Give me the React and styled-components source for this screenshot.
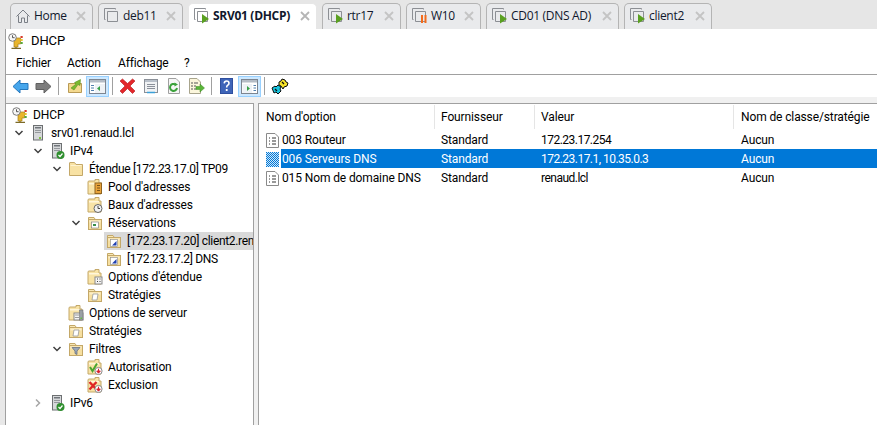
import React from "react";
import styled, { createGlobalStyle } from "styled-components";

const Global = createGlobalStyle`
  html, body { margin: 0; padding: 0; height: 100%; overflow: hidden; }
  body { background: #e8e8e8; font-family: "Roboto", "Noto Sans", sans-serif; font-size: 12px; letter-spacing: -0.12px; color: #000; }
  #root { height: 100%; }
`;

const Page = styled.div`
  width: 877px;
  height: 425px;
  display: flex;
  flex-direction: column;
  overflow: hidden;
`;

/* tabs */
const TabBar = styled.div`
  height: 29px;
  flex: none;
  display: flex;
  align-items: flex-end;
  gap: 5px;
  padding-left: 10px;
  background: #e6e6e6;
`;

const Tab = styled.div`
  width: ${(p) => p.$w}px;
  height: 26px;
  box-sizing: border-box;
  display: flex;
  align-items: center;
  padding: 0 6px 2px 4px;
  gap: 3px;
  background: ${(p) => (p.$active ? "#fff" : "#e9eaec")};
  border: 1px solid ${(p) => (p.$active ? "#e6e6e6" : "#b4b4b4")};
  border-bottom: none;
  border-radius: 5px 5px 0 0;
  font-family: "Open Sans", sans-serif;
  font-size: 12px;
  letter-spacing: -0.3px;
  font-weight: ${(p) => (p.$active ? 700 : 400)};
  color: #10182c;
  white-space: nowrap;
`;

const TabLabel = styled.span`
  flex: 1;
`;

const CloseX = styled.svg`
  width: 10px;
  height: 10px;
  flex: none;
`;

/* window */
const Window = styled.div`
  flex: 1;
  margin-left: 5px;
  border-left: 1px solid #a0a0a0;
  background: #fff;
  display: flex;
  flex-direction: column;
  min-height: 0;
`;

const TitleRow = styled.div`
  height: 23px;
  display: flex;
  align-items: center;
  padding-left: 2px;
  gap: 7px;
  font-size: 13px;
`;

const MenuBar = styled.div`
  height: 22px;
  display: flex;
  align-items: center;
  padding-left: 10px;
  border-bottom: 1px solid #a0a0a0;
`;

const MenuItem = styled.span`
  width: ${(p) => p.$w}px;
`;

const Toolbar = styled.div`
  height: 22px;
  display: flex;
  align-items: center;
  padding-left: 2px;
`;

const ToolButton = styled.div`
  width: ${(p) => p.$w || 23}px;
  height: 21px;
  display: flex;
  align-items: center;
  justify-content: center;
  flex: none;
  box-sizing: border-box;
  ${(p) => p.$on && "background: #cce8ff; border: 1px solid #99d1ff;"}
`;

const ToolSep = styled.div`
  width: 1px;
  height: 18px;
  background: #a0a0a0;
  margin: 0 ${(p) => p.$m || 3}px;
  flex: none;
`;

const Strip = styled.div`
  height: 6px;
  background: #f0f0f0;
  flex: none;
`;

const Panels = styled.div`
  flex: 1;
  min-height: 0;
  display: flex;
  gap: 4px;
  background: #f0f0f0;
`;

const TreePane = styled.div`
  width: 248px;
  box-sizing: border-box;
  background: #fff;
  border-top: 1px solid #a0a0a0;
  border-right: 1px solid #a0a0a0;
  padding-top: 2px;
  overflow: hidden;
  flex: none;
`;

const TreeRow = styled.div`
  height: 18px;
  display: flex;
  align-items: center;
  white-space: nowrap;
  overflow: hidden;
  background: ${(p) => (p.$selected ? "#d9d9d9" : "transparent")};
  margin-left: ${(p) => (p.$selected ? 98 : 0)}px;
  padding-left: ${(p) => (p.$selected ? 2 : 0)}px;
`;

const Indent = styled.div`
  width: ${(p) => p.$level * 19 + 5}px;
  flex: none;
  display: flex;
  justify-content: flex-end;
  align-items: center;
  padding-right: 6px;
  box-sizing: border-box;
`;

const IconSlot = styled.div`
  width: 16px;
  height: 16px;
  flex: none;
  display: flex;
  align-items: center;
  justify-content: center;
`;

const TreeLabel = styled.span`
  margin-left: 5px;
  letter-spacing: ${(p) => (p.$tight ? "-0.32px" : "inherit")};
`;

const ListPane = styled.div`
  flex: 1;
  background: #fff;
  border-top: 1px solid #a0a0a0;
  border-left: 1px solid #a0a0a0;
  min-width: 0;
  overflow: hidden;
`;

const columns = "176px 100px 199px 1fr";

const HeaderRow = styled.div`
  display: grid;
  grid-template-columns: ${columns};
  height: 25px;
  margin-bottom: 1px;
  white-space: nowrap;
`;

const HeaderCell = styled.div`
  display: flex;
  align-items: center;
  padding-left: ${(p) => p.$pad || 6}px;
  border-right: ${(p) => (p.$last ? "none" : "1px solid #e5e5e5")};
  margin-top: 1px;
`;

const ListRow = styled.div`
  height: 19px;
  display: grid;
  grid-template-columns: ${columns};
  align-items: center;
  position: relative;
`;

const NameCell = styled.div`
  display: flex;
  align-items: center;
  height: 100%;
  padding-left: 7px;
  gap: 2px;
`;

const NameText = styled.span`
  height: 100%;
  display: flex;
  align-items: center;
  flex: 1;
  padding-left: 1px;
  ${(p) => p.$selected && "background: #0078d7; color: #fff;"}
`;

const Cell = styled.div`
  height: 100%;
  display: flex;
  align-items: center;
  padding-left: ${(p) => p.$pad || 6}px;
  letter-spacing: ${(p) => (p.$tight ? "-0.52px" : "inherit")};
  ${(p) => p.$selected && "background: #0078d7; color: #fff;"}
`;

/* drawings */
const Svg = ({ w = 16, h = 16, children }) => (
  <svg width={w} height={h} viewBox={`0 0 ${w} ${h}`} style={{ display: "block", flex: "none" }}>
    {children}
  </svg>
);

const X = ({ active }) => (
  <CloseX viewBox="0 0 10 10">
    <path d="M1 1 L9 9 M9 1 L1 9" stroke={active ? "#b5b5b5" : "#c4c4c4"} strokeWidth="1.8" />
  </CloseX>
);

const HomeIcon = () => (
  <Svg>
    <path d="M1.5 8.5 L8 2 L14.5 8.5 M3.5 7.5 V14.5 H6.5 V10 H9.5 V14.5 H12.5 V7.5" fill="none" stroke="#7a7f86" strokeWidth="1" />
  </Svg>
);

const VmIcon = ({ state }) => (
  <Svg w={17} h={17}>
    <path d="M12.5 2.5 V1.5 H1.5 V12.5 H2.5" fill="none" stroke="#8c8f94" />
    <path d="M4.5 4.5 H14.5 V14.5 H4.5 Z" fill="none" stroke="#8c8f94" />
    {state === "run" && <path d="M9 7 L16 12 L9 16.5 Z" fill="#5aa021" />}
    {state === "pause" && (
      <g fill="#f26b1d">
        <rect x="10" y="8" width="2" height="8" />
        <rect x="13.5" y="8" width="2" height="8" />
      </g>
    )}
  </Svg>
);

const DhcpIcon = () => (
  <Svg>
    <path d="M6 5 H12.5 V11 H10 V14 H6 Z" fill="#e8b52c" stroke="#a8801a" strokeWidth="0.7" />
    <circle cx="4.5" cy="4.5" r="3.8" fill="#f6f6f6" stroke="#7c7c7c" />
    <path d="M4.5 2.3 V4.7 H6.6" fill="none" stroke="#555" />
    <rect x="12.5" y="3" width="2.2" height="2" fill="#d9392a" />
    <rect x="12.5" y="6" width="2.2" height="2" fill="#e8c52c" />
    <rect x="12.5" y="9" width="2.2" height="2" fill="#58a83a" />
    <path d="M8 14 V15 M3.5 15.4 H13" stroke="#7c6a28" strokeWidth="1.2" />
  </Svg>
);

const ServerIcon = ({ ok }) => (
  <Svg>
    <rect x="3.5" y="0.5" width="9" height="14.5" fill="#d6d8da" stroke="#6d7072" />
    <rect x="5" y="2" width="6" height="1.5" fill="#70757a" />
    <rect x="5" y="5" width="6" height="1" fill="#94989c" />
    <rect x="5" y="7" width="6" height="1" fill="#94989c" />
    {ok ? (
      <>
        <circle cx="11.5" cy="12" r="4" fill="#2f8f2f" />
        <path d="M9.5 12 L11 13.5 L13.5 10.5" fill="none" stroke="#fff" strokeWidth="1.2" />
      </>
    ) : (
      <rect x="9" y="12" width="2" height="2" fill="#7fc241" />
    )}
  </Svg>
);

const FolderBase = () => (
  <>
    <path d="M1.5 4 V2.5 H7 L8 4" fill="#f7e7b5" stroke="#c4a868" />
    <rect x="1.5" y="4.5" width="13" height="10" fill="#f6dfa0" stroke="#c4a868" />
    <rect x="2.5" y="5.5" width="11" height="2" fill="#fbeec8" />
  </>
);

const TallFolder = ({ children }) => (
  <Svg>
    <path d="M1 15 V3 Q1 2 2 2 H8 V0.5 H12 V4 H14 V15 Z" fill="#f8e3a6" stroke="#c4a868" />
    <rect x="2" y="4" width="10" height="1.5" fill="#fff6da" />
    {children}
  </Svg>
);

const PlainFolder = () => (
  <Svg>
    <path d="M1.5 14.5 V2 Q1.5 1.5 2 1.5 H6.5 L8 3.5 H14.5 V14.5 Z" fill="#f8e2a4" stroke="#c4a868" />
    <path d="M2.5 4.5 H13.5" stroke="#fff3cf" />
  </Svg>
);

const BoxFolder = ({ children }) => (
  <Svg>
    <FolderBase />
    {children}
  </Svg>
);

const Chevron = ({ open, dim }) => (
  <Svg w={10} h={10}>
    {open ? (
      <path d="M1.5 3 L5 6.5 L8.5 3" fill="none" stroke="#404040" strokeWidth="1.5" />
    ) : (
      <path d="M3 1.5 L6.5 5 L3 8.5" fill="none" stroke={dim ? "#a6a6a6" : "#404040"} strokeWidth="1.5" />
    )}
  </Svg>
);

const ResvMark = () => (
  <>
    <rect x="4.5" y="7" width="7" height="6" fill="#fff" stroke="#777" strokeWidth="0.6" />
    <rect x="6" y="9" width="3" height="2" fill="#3a8f4a" />
  </>
);

const ResvItemMark = () => (
  <>
    <rect x="4.5" y="6.5" width="7" height="7" fill="#fff" stroke="#888" strokeWidth="0.6" />
    <path d="M6 12.5 H10.5 V8 Z" fill="#1f3fb0" />
  </>
);

const ScriptMark = () => (
  <path d="M6 7 H11 L10 13 H5 Z" fill="#fff" stroke="#999" strokeWidth="0.8" />
);

const DownBadge = () => (
  <>
    <circle cx="11.5" cy="12" r="3.6" fill="#fff" stroke="#8a8a8a" />
    <path d="M11.5 9.7 V12 M9.7 12 H13.3 L11.5 14.2 Z" fill="#d8202a" stroke="#d8202a" />
  </>
);

const OptionDoc = ({ selected }) => (
  <Svg w={13} h={16}>
    <defs>
      <pattern id="dither" width="2" height="2" patternUnits="userSpaceOnUse">
        <rect width="2" height="2" fill="#0078d7" />
        <rect width="1" height="1" fill="#cfe6f8" />
        <rect x="1" y="1" width="1" height="1" fill="#cfe6f8" />
      </pattern>
    </defs>
    <path d="M0.5 1.5 H9 L12.5 5 V15.5 H0.5 Z" fill="#fff" stroke="#8a8a8a" />
    <path d="M3 6 H4 M6 6 H10 M3 9 H4 M6 9 H10 M3 12 H4 M6 12 H10" stroke="#333" />
    {selected && <rect x="0" y="1" width="13" height="15" fill="url(#dither)" />}
  </Svg>
);

const BackArrow = () => (
  <Svg w={17} h={15}>
    <path d="M1 7.5 L8 1 V4.5 H16 V10.5 H8 V14 Z" fill="#46a6ec" stroke="#2477bd" />
  </Svg>
);

const ForwardArrow = () => (
  <Svg w={17} h={15}>
    <path d="M16 7.5 L9 1 V4.5 H1 V10.5 H9 V14 Z" fill="#7d7d7d" stroke="#606060" />
  </Svg>
);

const UpFolder = () => (
  <Svg>
    <path d="M1.5 14.5 V5.5 H14.5 V14.5 Z" fill="#f4d98f" stroke="#b99a55" />
    <path d="M4 10 L9 6 L7.5 4.5 L13.5 1.5 L13 7.5 L11 6.5 L7 12 Z" fill="#7cb82f" stroke="#4f8a1b" strokeWidth="0.5" />
  </Svg>
);

const PaneToggle = ({ right }) => (
  <Svg w={17} h={15}>
    <rect x="0.5" y="0.5" width="16" height="14" fill="#fff" stroke="#7d8590" />
    <rect x="1" y="1" width="15" height="2.5" fill="#b4bcc6" />
    <path d={right ? "M1.5 5 H11 V14 H1.5 Z" : "M6 5 H16 V14 H6 Z"} fill="#eef2f6" />
    <path d={right ? "M12.5 6.5 H15 M12.5 9 H15 M12.5 11.5 H15" : "M2 6.5 H5 M2 9 H5 M2 11.5 H5"} stroke="#4f7fae" />
    <path d={right ? "M6 7 L9 9.5 L6 12 Z" : "M11 7 L8 9.5 L11 12 Z"} fill="#37a047" />
  </Svg>
);

const DeleteIcon = () => (
  <Svg w={17} h={16}>
    <path d="M1 3 L3.5 1 L8.5 5.5 L13.5 1 L16 3 L11 8 L16 13 L13.5 15.5 L8.5 10.5 L3.5 15.5 L1 13 L6 8 Z" fill="#e3262a" stroke="#b0181c" strokeWidth="0.6" />
  </Svg>
);

const PropsIcon = () => (
  <Svg>
    <rect x="1.5" y="1.5" width="13" height="13" fill="#f0f2f4" stroke="#8b9098" />
    <rect x="2" y="2" width="12" height="2" fill="#b8c0ca" />
    <path d="M4 6.5 H12 M4 8.5 H12 M4 10.5 H12" stroke="#8a909a" />
    <path d="M4 14.5 H12" stroke="#3ba0d8" strokeWidth="1.5" />
  </Svg>
);

const RefreshIcon = () => (
  <Svg w={14} h={16}>
    <path d="M1.5 0.5 H9 L12.5 4 V15.5 H1.5 Z" fill="#f6f6f6" stroke="#a0a0a0" />
    <path d="M10 10 A3.5 3.5 0 1 1 8.5 6.5" fill="none" stroke="#3aa13a" strokeWidth="2" />
    <path d="M7.5 4.5 L11 6.5 L7.5 8.5 Z" fill="#3aa13a" />
  </Svg>
);

const ExportIcon = () => (
  <Svg w={17} h={16}>
    <path d="M1.5 0.5 H9 L12.5 4 V15.5 H1.5 Z" fill="#fbf6dc" stroke="#a8a48c" />
    <path d="M3 5 H5 M6 5 H10 M3 8 H5 M6 8 H8 M3 11 H5 M6 11 H8" stroke="#555" />
    <path d="M8 8.5 H12 V6 L16.5 10 L12 14 V11.5 H8 Z" fill="#5ab53a" stroke="#3d8a22" strokeWidth="0.5" />
  </Svg>
);

const HelpIcon = () => (
  <Svg w={13} h={16}>
    <rect width="13" height="16" fill="#2f4f9e" />
    <rect x="1" y="1" width="11" height="14" fill="#3e64b8" />
    <path d="M4.2 5.4 Q4.4 3 6.6 3 Q9 3 9 5.2 Q9 6.6 7.5 7.4 Q6.7 7.9 6.7 9.6" fill="none" stroke="#fff" strokeWidth="1.6" />
    <rect x="5.8" y="11" width="1.8" height="2" fill="#fff" />
  </Svg>
);

const PlugIcon = () => (
  <Svg w={18} h={17}>
    <path d="M1 10 L4 8 L5 9 L7 7 L10 9 L9 11 L10 13 L7 16 L5 14 L3 15 Z" fill="#19c3dc" stroke="#0c0c0c" strokeWidth="1" />
    <path d="M8 4 L10 3 L11 1 L14 2 L15 4 L17 5 L16 8 L13 9 L12 11 L10 8 L8 7 Z" fill="#f5e12a" stroke="#0c0c0c" strokeWidth="1" />
    <path d="M4 11 L6 13 M11 4 L13 6" stroke="#0c0c0c" strokeWidth="1.2" />
  </Svg>
);

/* data */
const tabs = [
  { label: "Home", w: 83, icon: <HomeIcon /> },
  { label: "deb11", w: 85, icon: <VmIcon /> },
  { label: "SRV01 (DHCP)", w: 129, icon: <VmIcon state="run" />, active: true },
  { label: "rtr17", w: 79, icon: <VmIcon state="run" /> },
  { label: "W10", w: 75, icon: <VmIcon state="pause" /> },
  { label: "CD01 (DNS AD)", w: 133, icon: <VmIcon state="run" /> },
  { label: "client2", w: 88, icon: <VmIcon state="run" /> },
];

const tree = [
  { level: 0, label: "DHCP", icon: <DhcpIcon /> },
  { level: 1, label: "srv01.renaud.lcl", icon: <ServerIcon />, chevron: "open" },
  { level: 2, label: "IPv4", icon: <ServerIcon ok />, chevron: "open" },
  { level: 3, label: "Étendue [172.23.17.0] TP09", icon: <PlainFolder />, chevron: "open", tight: true },
  {
    level: 4,
    label: "Pool d'adresses",
    icon: (
      <TallFolder>
        <rect x="8" y="4" width="6.5" height="10.5" fill="#e8a33a" stroke="#8f6420" />
        <path d="M10 6.5 H13 M10 9 H13 M10 11.5 H13" stroke="#7a5318" />
      </TallFolder>
    ),
  },
  {
    level: 4,
    label: "Baux d'adresses",
    icon: (
      <TallFolder>
        <circle cx="11" cy="11.5" r="4" fill="#f2f2f2" stroke="#666" />
        <path d="M11 9 V11.5 H13" fill="none" stroke="#444" />
      </TallFolder>
    ),
  },
  { level: 4, label: "Réservations", icon: <BoxFolder><ResvMark /></BoxFolder>, chevron: "open" },
  { level: 5, label: "[172.23.17.20] client2.renaud.lcl", icon: <BoxFolder><ResvItemMark /></BoxFolder>, selected: true, tight: true },
  { level: 5, label: "[172.23.17.2] DNS", icon: <BoxFolder><ResvItemMark /></BoxFolder>, tight: true },
  {
    level: 4,
    label: "Options d'étendue",
    icon: (
      <TallFolder>
        <rect x="8" y="8" width="7" height="7" fill="#f4f4f4" stroke="#8a8a8a" />
        <path d="M10 10 H11 M12.5 10 H13.5 M10 12.5 H11 M12.5 12.5 H13.5" stroke="#444" />
      </TallFolder>
    ),
  },
  { level: 4, label: "Stratégies", icon: <BoxFolder><ScriptMark /></BoxFolder> },
  {
    level: 3,
    label: "Options de serveur",
    icon: (
      <TallFolder>
        <rect x="6" y="8" width="9" height="7" fill="#f4f4f4" stroke="#8a8a8a" />
        <rect x="11.5" y="5" width="3.5" height="10" fill="#9aa0a6" stroke="#666" strokeWidth="0.5" />
        <path d="M7.5 10 H8.5 M9.5 10 H10.5 M7.5 12.5 H8.5 M9.5 12.5 H10.5" stroke="#444" />
        <rect x="12.5" y="12.5" width="1.5" height="1.5" fill="#63c040" />
      </TallFolder>
    ),
  },
  { level: 3, label: "Stratégies", icon: <BoxFolder><ScriptMark /></BoxFolder> },
  {
    level: 3,
    label: "Filtres",
    chevron: "open",
    icon: (
      <BoxFolder>
        <path d="M4 6.5 H12 L9 10 V13.5 L7 12.5 V10 Z" fill="#9aa7b8" stroke="#5c6675" strokeWidth="0.7" />
      </BoxFolder>
    ),
  },
  {
    level: 4,
    label: "Autorisation",
    icon: (
      <TallFolder>
        <path d="M3 8 L5.5 12 L10 4.5" fill="none" stroke="#4aa52e" strokeWidth="2" />
        <DownBadge />
      </TallFolder>
    ),
  },
  {
    level: 4,
    label: "Exclusion",
    icon: (
      <TallFolder>
        <path d="M2.5 5 L9.5 12.5 M9.5 5 L2.5 12.5" stroke="#df2525" strokeWidth="2.4" />
        <DownBadge />
      </TallFolder>
    ),
  },
  { level: 2, label: "IPv6", icon: <ServerIcon ok />, chevron: "closed" },
];

const options = [
  ["003 Routeur", "Standard", "172.23.17.254", "Aucun"],
  ["006 Serveurs DNS", "Standard", "172.23.17.1, 10.35.0.3", "Aucun"],
  ["015 Nom de domaine DNS", "Standard", "renaud.lcl", "Aucun"],
];

export default function App() {
  return (
    <Page>
      <Global />
      <TabBar>
        {tabs.map((t) => (
          <Tab key={t.label} $w={t.w} $active={t.active}>
            {t.icon}
            <TabLabel>{t.label}</TabLabel>
            <X active={t.active} />
          </Tab>
        ))}
      </TabBar>
      <Window>
        <TitleRow>
          <DhcpIcon />
          DHCP
        </TitleRow>
        <MenuBar>
          <MenuItem $w={51}>Fichier</MenuItem>
          <MenuItem $w={51}>Action</MenuItem>
          <MenuItem $w={66}>Affichage</MenuItem>
          <MenuItem $w={12}>?</MenuItem>
        </MenuBar>
        <Toolbar>
          <ToolButton $w={24}><BackArrow /></ToolButton>
          <ToolButton $w={22}><ForwardArrow /></ToolButton>
          <ToolSep $m={4} />
          <ToolButton><UpFolder /></ToolButton>
          <ToolButton $on><PaneToggle /></ToolButton>
          <ToolSep />
          <ToolButton><DeleteIcon /></ToolButton>
          <ToolButton><PropsIcon /></ToolButton>
          <ToolButton><RefreshIcon /></ToolButton>
          <ToolButton><ExportIcon /></ToolButton>
          <ToolSep />
          <ToolButton><HelpIcon /></ToolButton>
          <ToolButton $on><PaneToggle right /></ToolButton>
          <ToolSep />
          <ToolButton><PlugIcon /></ToolButton>
        </Toolbar>
        <Strip />
        <Panels>
          <TreePane>
            {tree.map((n, i) => (
              <TreeRow key={i} $selected={n.selected}>
                {!n.selected && (
                  <Indent $level={n.level}>
                    {n.chevron && <Chevron open={n.chevron === "open"} dim={n.chevron === "closed"} />}
                  </Indent>
                )}
                <IconSlot>{n.icon}</IconSlot>
                <TreeLabel $tight={n.tight}>{n.label}</TreeLabel>
              </TreeRow>
            ))}
          </TreePane>
          <ListPane>
            <HeaderRow>
              <HeaderCell $pad={7}>Nom d'option</HeaderCell>
              <HeaderCell>Fournisseur</HeaderCell>
              <HeaderCell>Valeur</HeaderCell>
              <HeaderCell $last $pad={7}>Nom de classe/stratégie</HeaderCell>
            </HeaderRow>
            {options.map((row, i) => {
              const sel = i === 1;
              return (
                <ListRow key={row[0]}>
                  <NameCell>
                    <OptionDoc selected={sel} />
                    <NameText $selected={sel}>{row[0]}</NameText>
                  </NameCell>
                  <Cell $selected={sel}>{row[1]}</Cell>
                  <Cell $selected={sel} $tight>{row[2]}</Cell>
                  <Cell $selected={sel} $pad={7}>{row[3]}</Cell>
                </ListRow>
              );
            })}
          </ListPane>
        </Panels>
      </Window>
    </Page>
  );
}
